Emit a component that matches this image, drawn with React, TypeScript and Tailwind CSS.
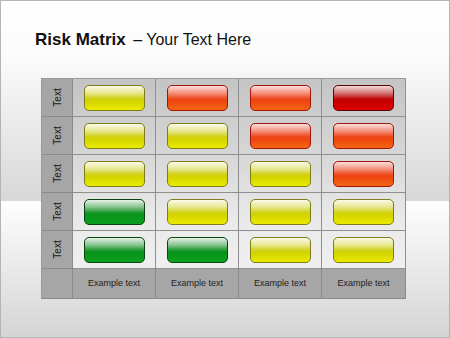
const buttonStyles: Record<string, string> = {
  yellow:
    'border-[#7e7e18] bg-[linear-gradient(to_bottom,rgba(255,255,255,0.92)_0%,rgba(255,255,255,0.55)_30%,rgba(255,255,255,0.1)_52%,rgba(255,255,255,0)_60%),linear-gradient(to_bottom,#c4c400_0%,#cccc00_50%,#eaea00_100%)]',
  green:
    'border-[#0a4210] bg-[linear-gradient(to_bottom,rgba(255,255,255,0.9)_0%,rgba(255,255,255,0.5)_30%,rgba(255,255,255,0.08)_52%,rgba(255,255,255,0)_60%),linear-gradient(to_bottom,#067a14_0%,#08901a_50%,#0aa01e_100%)]',
  orange:
    'border-[#a0160a] bg-[linear-gradient(to_bottom,rgba(255,255,255,0.85)_0%,rgba(255,255,255,0.45)_30%,rgba(255,255,255,0.08)_52%,rgba(255,255,255,0)_60%),linear-gradient(to_bottom,#e62a0a_0%,#ec3a0e_50%,#f26614_100%)]',
  red:
    'border-[#560606] bg-[linear-gradient(to_bottom,rgba(255,255,255,0.85)_0%,rgba(255,255,255,0.45)_30%,rgba(255,255,255,0.06)_52%,rgba(255,255,255,0)_60%),linear-gradient(to_bottom,#a00000_0%,#bc0000_50%,#e00000_100%)]',
};

const rows = [
  ['yellow', 'orange', 'orange', 'red'],
  ['yellow', 'yellow', 'orange', 'orange'],
  ['yellow', 'yellow', 'yellow', 'orange'],
  ['green', 'yellow', 'yellow', 'yellow'],
  ['green', 'green', 'yellow', 'yellow'],
];

const GlossButton = ({ color }: { color: string }) => (
  <div className={`w-[61px] h-[26px] rounded-[5px] border ${buttonStyles[color]}`} />
);

const App = () => {
  return (
    <div className="w-[450px] h-[338px] border border-[#b4b4b4] overflow-hidden font-['Liberation_Sans',Arial,sans-serif] bg-[linear-gradient(to_bottom,#ffffff_0px,#fcfcfc_50px,#d8d8d8_200px,#fefefe_200px,#d4d4d4_337px)]">
      {/* Title */}
      <div className="pl-[34px] pt-[26px] h-[77px] text-[#111]">
        <span className="text-[17px] font-bold">Risk Matrix</span>
        <span className="text-[16px] ml-[3px]"> – Your Text Here</span>
      </div>

      {/* Matrix */}
      <div className="ml-[40px] w-[365px] grid grid-cols-[31px_83px_83px_83px_84px] grid-rows-[38px_38px_38px_38px_38px_30px] border-l border-t border-[#9a9a9a] bg-[linear-gradient(to_bottom,#c4c4c4_0%,#d4d4d4_30%,#eaeaea_65%,#f2f2f2_100%)]">
        {rows.map((row, r) => (
          <div key={r} className="contents">
            <div className="bg-[#a6a6a6] border-r border-b border-[#8a8a8a] flex items-center justify-center">
              <span className="-rotate-90 text-[10px] text-[#1a1a1a] whitespace-nowrap">Text</span>
            </div>
            {row.map((c, i) => (
              <div key={i} className="border-r border-b border-[#8f8f8f] flex items-center justify-center">
                <GlossButton color={c} />
              </div>
            ))}
          </div>
        ))}

        {/* Footer */}
        <div className="bg-[#a6a6a6] border-r border-b border-[#8a8a8a]" />
        {[0, 1, 2, 3].map((i) => (
          <div
            key={i}
            className="bg-[#a6a6a6] border-r border-b border-[#8a8a8a] flex items-center justify-center"
          >
            <span className="text-[9px] text-[#1e1e1e]">Example text</span>
          </div>
        ))}
      </div>
    </div>
  );
};

export default App;
